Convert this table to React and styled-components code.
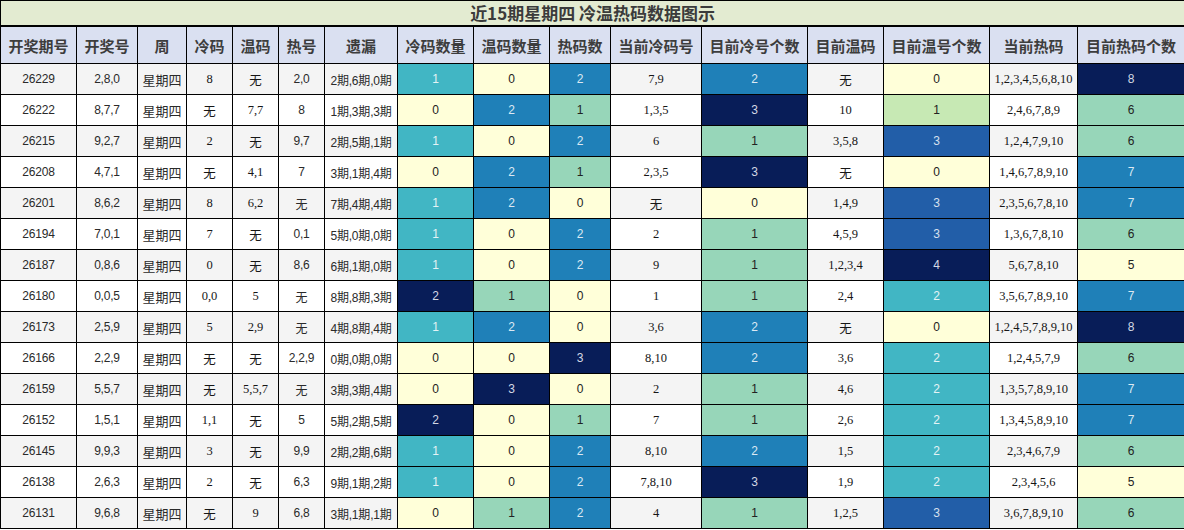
import React from "react";
import styled, { createGlobalStyle } from "styled-components";

const Global = createGlobalStyle`
  html, body { margin: 0; padding: 0; background: #ffffff; }
  body { width: 1184px; overflow: hidden; }
`;

const COLORS = {
  Y: { bg: "#ffffd9", fg: "#222222" },
  LG: { bg: "#c7e9b4", fg: "#222222" },
  G: { bg: "#97d6b9", fg: "#222222" },
  T: { bg: "#41b6c4", fg: "#e4f3f5" },
  B: { bg: "#1f80b8", fg: "#dce9f3" },
  DB: { bg: "#225ea8", fg: "#d6e0ee" },
  N: { bg: "#081d58", fg: "#d3d8e4" },
};

const widths = [76, 61, 49, 46, 46, 46, 73, 76, 76, 61, 91, 106, 76, 106, 88, 107];

const headers = [
  "开奖期号", "开奖号", "周", "冷码", "温码", "热号", "遗漏", "冷码数量", "温码数量",
  "热码数", "当前冷码号", "目前冷号个数", "目前温码", "目前温号个数", "当前热码", "目前热码个数",
];

// kind: s = sans, k = weekday, r = serif, c = colored count
const kinds = ["s", "s", "k", "r", "r", "s", "s", "c", "c", "c", "r", "c", "r", "c", "r", "c"];

const raw = [
  "26229|2,8,0|8|无|2,0|2期,6期,0期|1T|0Y|2B|7,9|2B|无|0Y|1,2,3,4,5,6,8,10|8N",
  "26222|8,7,7|无|7,7|8|1期,3期,3期|0Y|2B|1G|1,3,5|3N|10|1LG|2,4,6,7,8,9|6G",
  "26215|9,2,7|2|无|9,7|2期,5期,1期|1T|0Y|2B|6|1G|3,5,8|3DB|1,2,4,7,9,10|6G",
  "26208|4,7,1|无|4,1|7|3期,1期,4期|0Y|2B|1G|2,3,5|3N|无|0Y|1,4,6,7,8,9,10|7B",
  "26201|8,6,2|8|6,2|无|7期,4期,4期|1T|2B|0Y|无|0Y|1,4,9|3DB|2,3,5,6,7,8,10|7B",
  "26194|7,0,1|7|无|0,1|5期,0期,0期|1T|0Y|2B|2|1G|4,5,9|3DB|1,3,6,7,8,10|6G",
  "26187|0,8,6|0|无|8,6|6期,1期,0期|1T|0Y|2B|9|1G|1,2,3,4|4N|5,6,7,8,10|5Y",
  "26180|0,0,5|0,0|5|无|8期,8期,3期|2N|1G|0Y|1|1G|2,4|2T|3,5,6,7,8,9,10|7B",
  "26173|2,5,9|5|2,9|无|4期,8期,4期|1T|2B|0Y|3,6|2B|无|0Y|1,2,4,5,7,8,9,10|8N",
  "26166|2,2,9|无|无|2,2,9|0期,0期,0期|0Y|0Y|3N|8,10|2B|3,6|2T|1,2,4,5,7,9|6G",
  "26159|5,5,7|无|5,5,7|无|3期,3期,4期|0Y|3N|0Y|2|1G|4,6|2T|1,3,5,7,8,9,10|7B",
  "26152|1,5,1|1,1|无|5|5期,2期,5期|2N|0Y|1G|7|1G|2,6|2T|1,3,4,5,8,9,10|7B",
  "26145|9,9,3|3|无|9,9|2期,2期,6期|1T|0Y|2B|8,10|2B|1,5|2T|2,3,4,6,7,9|6G",
  "26138|2,6,3|2|无|6,3|9期,1期,2期|1T|0Y|2B|7,8,10|3N|1,9|2T|2,3,4,5,6|5Y",
  "26131|9,6,8|无|9|6,8|3期,1期,1期|0Y|1G|2B|4|1G|1,2,5|3DB|3,6,7,8,9,10|6G",
];

const rows = raw.map((line) => {
  const p = line.split("|");
  const cells = [p[0], p[1], "星期四", ...p.slice(2)];
  return cells.map((v, i) => {
    if (kinds[i] === "c") {
      const m = v.match(/^(\d+)([A-Z]+)$/);
      return { text: m[1], tone: m[2] };
    }
    return { text: v };
  });
});

const Sheet = styled.table`
  width: 1184px;
  border-collapse: collapse;
  table-layout: fixed;
  border-spacing: 0;
`;

const TitleCell = styled.th`
  height: 24px;
  padding: 0;
  background: #e3ebd1;
  border: 1px solid #000;
  border-bottom: 2px solid #000;
  color: #3b3b3b;
  font-family: "Noto Sans CJK SC", "Noto Sans", sans-serif;
  font-weight: 700;
  font-size: 17px;
  line-height: 24px;
  text-align: center;
`;

const HeadCell = styled.th`
  height: 36px;
  padding: 0;
  background: #dae0f1;
  border: 1px solid #000;
  border-top: 0;
  color: #3d3d3d;
  font-family: "Noto Sans CJK SC", "Noto Sans", sans-serif;
  font-weight: 700;
  font-size: 15px;
  text-align: center;
  white-space: nowrap;
  overflow: hidden;
`;

const Row = styled.tr`
  background: ${(p) => (p.$stripe ? "#f4f4f4" : "#ffffff")};
`;

const Cell = styled.td`
  height: 30px;
  padding: 0;
  border: 1px solid #000;
  text-align: center;
  white-space: nowrap;
  overflow: hidden;
  color: ${(p) => (p.$tone ? COLORS[p.$tone].fg : p.$kind === "r" ? "#161616" : "#2a2a2a")};
  background: ${(p) => (p.$tone ? COLORS[p.$tone].bg : "transparent")};
  font-family: ${(p) =>
    p.$kind === "r"
      ? `"Liberation Serif", "Noto Sans CJK SC", serif`
      : `"Liberation Sans", "Noto Sans CJK SC", sans-serif`};
  font-size: ${(p) => (p.$kind === "k" ? "13px" : p.$kind === "r" ? "12.5px" : "12px")};
  letter-spacing: ${(p) => (p.$kind === "s" || p.$kind === "c" ? "-0.2px" : "0")};
`;

export default function App() {
  return (
    <>
      <Global />
      <Sheet>
        <colgroup>
          {widths.map((w, i) => (
            <col key={i} style={{ width: w }} />
          ))}
        </colgroup>
        <thead>
          <tr>
            <TitleCell colSpan={16}>近15期星期四 冷温热码数据图示</TitleCell>
          </tr>
          <tr>
            {headers.map((h) => (
              <HeadCell key={h}>{h}</HeadCell>
            ))}
          </tr>
        </thead>
        <tbody>
          {rows.map((cells, r) => (
            <Row key={r} $stripe={r % 2 === 0}>
              {cells.map((c, i) => (
                <Cell key={i} $kind={kinds[i]} $tone={c.tone}>
                  {c.text}
                </Cell>
              ))}
            </Row>
          ))}
        </tbody>
      </Sheet>
    </>
  );
}
